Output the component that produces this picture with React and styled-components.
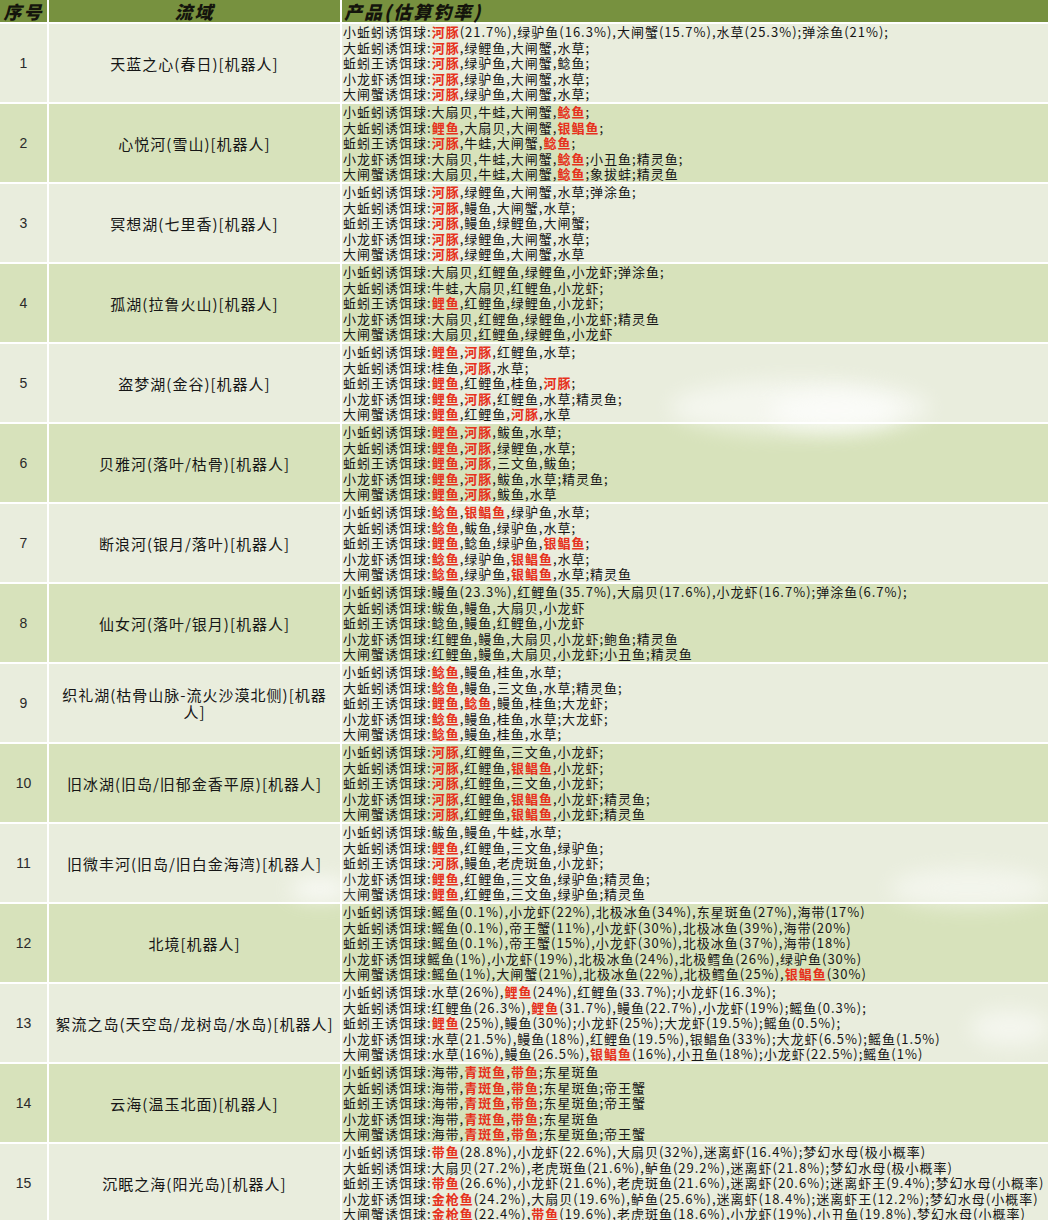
import React from 'react';
import styled, { createGlobalStyle } from 'styled-components';

const GlobalStyle = createGlobalStyle`
  html, body {
    margin: 0;
    padding: 0;
    background: #fff;
  }
  body {
    font-family: "Noto Sans CJK SC", "Noto Sans", sans-serif;
  }
`;

// {xx} 表示红色高亮的鱼
const rows = [
  {
    name: '天蓝之心(春日)[机器人]',
    lines: [
      '小蚯蚓诱饵球:{河豚}(21.7%),绿驴鱼(16.3%),大闸蟹(15.7%),水草(25.3%);弹涂鱼(21%);',
      '大蚯蚓诱饵球:{河豚},绿鲤鱼,大闸蟹,水草;',
      '蚯蚓王诱饵球:{河豚},绿驴鱼,大闸蟹,鲶鱼;',
      '小龙虾诱饵球:{河豚},绿驴鱼,大闸蟹,水草;',
      '大闸蟹诱饵球:{河豚},绿驴鱼,大闸蟹,水草;',
    ],
  },
  {
    name: '心悦河(雪山)[机器人]',
    lines: [
      '小蚯蚓诱饵球:大扇贝,牛蛙,大闸蟹,{鲶鱼};',
      '大蚯蚓诱饵球:{鲤鱼},大扇贝,大闸蟹,{银鲳鱼};',
      '蚯蚓王诱饵球:{河豚},牛蛙,大闸蟹,{鲶鱼};',
      '小龙虾诱饵球:大扇贝,牛蛙,大闸蟹,{鲶鱼};小丑鱼;精灵鱼;',
      '大闸蟹诱饵球:大扇贝,牛蛙,大闸蟹,{鲶鱼};象拔蚌;精灵鱼',
    ],
  },
  {
    name: '冥想湖(七里香)[机器人]',
    lines: [
      '小蚯蚓诱饵球:{河豚},绿鲤鱼,大闸蟹,水草;弹涂鱼;',
      '大蚯蚓诱饵球:{河豚},鳗鱼,大闸蟹,水草;',
      '蚯蚓王诱饵球:{河豚},鳗鱼,绿鲤鱼,大闸蟹;',
      '小龙虾诱饵球:{河豚},绿鲤鱼,大闸蟹,水草;',
      '大闸蟹诱饵球:{河豚},绿鲤鱼,大闸蟹,水草',
    ],
  },
  {
    name: '孤湖(拉鲁火山)[机器人]',
    lines: [
      '小蚯蚓诱饵球:大扇贝,红鲤鱼,绿鲤鱼,小龙虾;弹涂鱼;',
      '大蚯蚓诱饵球:牛蛙,大扇贝,红鲤鱼,小龙虾;',
      '蚯蚓王诱饵球:{鲤鱼},红鲤鱼,绿鲤鱼,小龙虾;',
      '小龙虾诱饵球:大扇贝,红鲤鱼,绿鲤鱼,小龙虾;精灵鱼',
      '大闸蟹诱饵球:大扇贝,红鲤鱼,绿鲤鱼,小龙虾',
    ],
  },
  {
    name: '盗梦湖(金谷)[机器人]',
    lines: [
      '小蚯蚓诱饵球:{鲤鱼},{河豚},红鲤鱼,水草;',
      '大蚯蚓诱饵球:桂鱼,{河豚},水草;',
      '蚯蚓王诱饵球:{鲤鱼},红鲤鱼,桂鱼,{河豚};',
      '小龙虾诱饵球:{鲤鱼},{河豚},红鲤鱼,水草;精灵鱼;',
      '大闸蟹诱饵球:{鲤鱼},红鲤鱼,{河豚},水草',
    ],
  },
  {
    name: '贝雅河(落叶/枯骨)[机器人]',
    lines: [
      '小蚯蚓诱饵球:{鲤鱼},{河豚},鲅鱼,水草;',
      '大蚯蚓诱饵球:{鲤鱼},{河豚},绿鲤鱼,水草;',
      '蚯蚓王诱饵球:{鲤鱼},{河豚},三文鱼,鲅鱼;',
      '小龙虾诱饵球:{鲤鱼},{河豚},鲅鱼,水草;精灵鱼;',
      '大闸蟹诱饵球:{鲤鱼},{河豚},鲅鱼,水草',
    ],
  },
  {
    name: '断浪河(银月/落叶)[机器人]',
    lines: [
      '小蚯蚓诱饵球:{鲶鱼},{银鲳鱼},绿驴鱼,水草;',
      '大蚯蚓诱饵球:{鲶鱼},鲅鱼,绿驴鱼,水草;',
      '蚯蚓王诱饵球:{鲤鱼},鲶鱼,绿驴鱼,{银鲳鱼};',
      '小龙虾诱饵球:{鲶鱼},绿驴鱼,{银鲳鱼},水草;',
      '大闸蟹诱饵球:{鲶鱼},绿驴鱼,{银鲳鱼},水草;精灵鱼',
    ],
  },
  {
    name: '仙女河(落叶/银月)[机器人]',
    lines: [
      '小蚯蚓诱饵球:鳗鱼(23.3%),红鲤鱼(35.7%),大扇贝(17.6%),小龙虾(16.7%);弹涂鱼(6.7%);',
      '大蚯蚓诱饵球:鲅鱼,鳗鱼,大扇贝,小龙虾',
      '蚯蚓王诱饵球:鲶鱼,鳗鱼,红鲤鱼,小龙虾',
      '小龙虾诱饵球:红鲤鱼,鳗鱼,大扇贝,小龙虾;鲍鱼;精灵鱼',
      '大闸蟹诱饵球:红鲤鱼,鳗鱼,大扇贝,小龙虾;小丑鱼;精灵鱼',
    ],
  },
  {
    name: '织礼湖(枯骨山脉-流火沙漠北侧)[机器人]',
    lines: [
      '小蚯蚓诱饵球:{鲶鱼},鳗鱼,桂鱼,水草;',
      '大蚯蚓诱饵球:{鲶鱼},鳗鱼,三文鱼,水草;精灵鱼;',
      '蚯蚓王诱饵球:{鲤鱼},{鲶鱼},鳗鱼,桂鱼;大龙虾;',
      '小龙虾诱饵球:{鲶鱼},鳗鱼,桂鱼,水草;大龙虾;',
      '大闸蟹诱饵球:{鲶鱼},鳗鱼,桂鱼,水草;',
    ],
  },
  {
    name: '旧冰湖(旧岛/旧郁金香平原)[机器人]',
    lines: [
      '小蚯蚓诱饵球:{河豚},红鲤鱼,三文鱼,小龙虾;',
      '大蚯蚓诱饵球:{河豚},红鲤鱼,{银鲳鱼},小龙虾;',
      '蚯蚓王诱饵球:{河豚},红鲤鱼,三文鱼,小龙虾;',
      '小龙虾诱饵球:{河豚},红鲤鱼,{银鲳鱼},小龙虾;精灵鱼;',
      '大闸蟹诱饵球:{河豚},红鲤鱼,{银鲳鱼},小龙虾;精灵鱼',
    ],
  },
  {
    name: '旧微丰河(旧岛/旧白金海湾)[机器人]',
    lines: [
      '小蚯蚓诱饵球:鲅鱼,鳗鱼,牛蛙,水草;',
      '大蚯蚓诱饵球:{鲤鱼},红鲤鱼,三文鱼,绿驴鱼;',
      '蚯蚓王诱饵球:{河豚},鳗鱼,老虎斑鱼,小龙虾;',
      '小龙虾诱饵球:{鲤鱼},红鲤鱼,三文鱼,绿驴鱼;精灵鱼;',
      '大闸蟹诱饵球:{鲤鱼},红鲤鱼,三文鱼,绿驴鱼;精灵鱼',
    ],
  },
  {
    name: '北境[机器人]',
    lines: [
      '小蚯蚓诱饵球:鳐鱼(0.1%),小龙虾(22%),北极冰鱼(34%),东星斑鱼(27%),海带(17%)',
      '大蚯蚓诱饵球:鳐鱼(0.1%),帝王蟹(11%),小龙虾(30%),北极冰鱼(39%),海带(20%)',
      '蚯蚓王诱饵球:鳐鱼(0.1%),帝王蟹(15%),小龙虾(30%),北极冰鱼(37%),海带(18%)',
      '小龙虾诱饵球鳐鱼(1%),小龙虾(19%),北极冰鱼(24%),北极鳕鱼(26%),绿驴鱼(30%)',
      '大闸蟹诱饵球:鳐鱼(1%),大闸蟹(21%),北极冰鱼(22%),北极鳕鱼(25%),{银鲳鱼}(30%)',
    ],
  },
  {
    name: '絮流之岛(天空岛/龙树岛/水岛)[机器人]',
    lines: [
      '小蚯蚓诱饵球:水草(26%),{鲤鱼}(24%),红鲤鱼(33.7%);小龙虾(16.3%);',
      '大蚯蚓诱饵球:红鲤鱼(26.3%),{鲤鱼}(31.7%),鳗鱼(22.7%),小龙虾(19%);鳐鱼(0.3%);',
      '蚯蚓王诱饵球:{鲤鱼}(25%),鳗鱼(30%);小龙虾(25%);大龙虾(19.5%);鳐鱼(0.5%);',
      '小龙虾诱饵球:水草(21.5%),鳗鱼(18%),红鲤鱼(19.5%),银鲳鱼(33%);大龙虾(6.5%);鳐鱼(1.5%)',
      '大闸蟹诱饵球:水草(16%),鳗鱼(26.5%),{银鲳鱼}(16%),小丑鱼(18%);小龙虾(22.5%);鳐鱼(1%)',
    ],
  },
  {
    name: '云海(温玉北面)[机器人]',
    lines: [
      '小蚯蚓诱饵球:海带,{青斑鱼},{带鱼};东星斑鱼',
      '大蚯蚓诱饵球:海带,{青斑鱼},{带鱼};东星斑鱼;帝王蟹',
      '蚯蚓王诱饵球:海带,{青斑鱼},{带鱼};东星斑鱼;帝王蟹',
      '小龙虾诱饵球:海带,{青斑鱼},{带鱼};东星斑鱼',
      '大闸蟹诱饵球:海带,{青斑鱼},{带鱼};东星斑鱼;帝王蟹',
    ],
  },
  {
    name: '沉眠之海(阳光岛)[机器人]',
    lines: [
      '小蚯蚓诱饵球:{带鱼}(28.8%),小龙虾(22.6%),大扇贝(32%),迷离虾(16.4%);梦幻水母(极小概率)',
      '大蚯蚓诱饵球:大扇贝(27.2%),老虎斑鱼(21.6%),鲈鱼(29.2%),迷离虾(21.8%);梦幻水母(极小概率)',
      '蚯蚓王诱饵球:{带鱼}(26.6%),小龙虾(21.6%),老虎斑鱼(21.6%),迷离虾(20.6%);迷离虾王(9.4%);梦幻水母(小概率)',
      '小龙虾诱饵球:{金枪鱼}(24.2%),大扇贝(19.6%),鲈鱼(25.6%),迷离虾(18.4%);迷离虾王(12.2%);梦幻水母(小概率)',
      '大闸蟹诱饵球:{金枪鱼}(22.4%),{带鱼}(19.6%),老虎斑鱼(18.6%),小龙虾(19%),小丑鱼(19.8%),梦幻水母(小概率)',
    ],
  },
];

// 截图上的白色水印笔刷痕迹
const smudges = [
  { x: 670, y: 380, w: 260, h: 55, o: 0.5 },
  { x: 770, y: 392, w: 130, h: 38, o: 0.6 },
  { x: 290, y: 878, w: 60, h: 22, o: 0.7 },
  { x: 890, y: 868, w: 160, h: 40, o: 0.45 },
  { x: 970, y: 1010, w: 80, h: 36, o: 0.5 },
];

const renderLine = text =>
  text.split(/(\{[^}]+\})/).map((part, i) =>
    part.startsWith('{') ? <Hot key={i}>{part.slice(1, -1)}</Hot> : part
  );

const App = () => {
  return (
    <>
      <GlobalStyle />
      <Table>
        <HeadCell $center>序号</HeadCell>
        <HeadCell $center>流域</HeadCell>
        <HeadCell>产品(估算钓率)</HeadCell>

        {rows.map((row, idx) => {
          const alt = idx % 2 === 1;
          return (
            <React.Fragment key={idx}>
              <NumCell $alt={alt}>{idx + 1}</NumCell>
              <NameCell $alt={alt}>{row.name}</NameCell>
              <ProductCell $alt={alt}>
                {row.lines.map((line, j) => (
                  <Line key={j}>{renderLine(line)}</Line>
                ))}
              </ProductCell>
            </React.Fragment>
          );
        })}

        {smudges.map((s, i) => (
          <Smudge key={i} $x={s.x} $y={s.y} $w={s.w} $h={s.h} $o={s.o} />
        ))}
      </Table>
    </>
  );
};

const Table = styled.div`
  position: relative;
  display: grid;
  grid-template-columns: 47px 291px 1fr;
  grid-template-rows: 22px;
  grid-auto-rows: 78px;
  gap: 2px;
  width: 1048px;
  background: #fff;
  overflow: hidden;
`;

const HeadCell = styled.div`
  display: flex;
  align-items: center;
  justify-content: ${p => (p.$center ? 'center' : 'flex-start')};
  padding-left: ${p => (p.$center ? '0' : '2px')};
  background: #77913f;
  color: #14140c;
  font-size: 18px;
  line-height: 22px;
  font-weight: 900;
  letter-spacing: 2px;
  font-style: italic;
`;

const BodyCell = styled.div`
  background: ${p => (p.$alt ? '#d7e2bb' : '#e9eddd')};
  color: #161616;
`;

const NumCell = styled(BodyCell)`
  display: flex;
  align-items: center;
  justify-content: center;
  font-family: 'Liberation Sans', Arial, sans-serif;
  font-size: 14px;
  color: #2a2a2a;
`;

const NameCell = styled(BodyCell)`
  display: flex;
  align-items: center;
  justify-content: center;
  text-align: center;
  padding: 0 5px;
  font-size: 15px;
  letter-spacing: 1px;
  line-height: 17px;
`;

const ProductCell = styled(BodyCell)`
  display: flex;
  flex-direction: column;
  padding-left: 1px;
  font-size: 13px;
  letter-spacing: 1px;
  line-height: 15.6px;
  white-space: nowrap;
`;

const Line = styled.div`
  height: 15.6px;
`;

const Hot = styled.span`
  color: #e6311c;
  font-weight: 700;
`;

const Smudge = styled.div`
  position: absolute;
  left: ${p => p.$x}px;
  top: ${p => p.$y}px;
  width: ${p => p.$w}px;
  height: ${p => p.$h}px;
  border-radius: 50%;
  background: #fff;
  opacity: ${p => p.$o};
  filter: blur(10px);
  pointer-events: none;
`;

export default App;
